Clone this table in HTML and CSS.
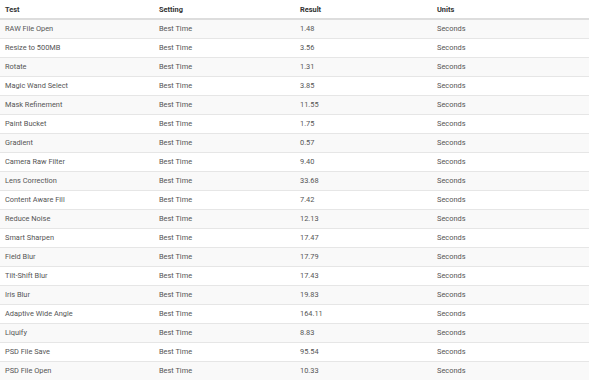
FILE: index.html
```html
<!DOCTYPE html>
<html lang="en">
<head>
    <meta charset="UTF-8">
    <title>Photoshop Benchmark Results</title>
    <link rel="stylesheet" href="styles.css">
</head>
<body>
    <!-- Results Table -->
    <table class="results">
        <thead>
            <tr>
                <th class="col-test">Test</th>
                <th class="col-setting">Setting</th>
                <th class="col-result">Result</th>
                <th>Units</th>
            </tr>
        </thead>
        <tbody>
            <tr><td>RAW File Open</td><td>Best Time</td><td>1.48</td><td>Seconds</td></tr>
            <tr><td>Resize to 500MB</td><td>Best Time</td><td>3.56</td><td>Seconds</td></tr>
            <tr><td>Rotate</td><td>Best Time</td><td>1.31</td><td>Seconds</td></tr>
            <tr><td>Magic Wand Select</td><td>Best Time</td><td>3.85</td><td>Seconds</td></tr>
            <tr><td>Mask Refinement</td><td>Best Time</td><td>11.55</td><td>Seconds</td></tr>
            <tr><td>Paint Bucket</td><td>Best Time</td><td>1.75</td><td>Seconds</td></tr>
            <tr><td>Gradient</td><td>Best Time</td><td>0.57</td><td>Seconds</td></tr>
            <tr><td>Camera Raw Filter</td><td>Best Time</td><td>9.40</td><td>Seconds</td></tr>
            <tr><td>Lens Correction</td><td>Best Time</td><td>33.68</td><td>Seconds</td></tr>
            <tr><td>Content Aware Fill</td><td>Best Time</td><td>7.42</td><td>Seconds</td></tr>
            <tr><td>Reduce Noise</td><td>Best Time</td><td>12.13</td><td>Seconds</td></tr>
            <tr><td>Smart Sharpen</td><td>Best Time</td><td>17.47</td><td>Seconds</td></tr>
            <tr><td>Field Blur</td><td>Best Time</td><td>17.79</td><td>Seconds</td></tr>
            <tr><td>Tilt-Shift Blur</td><td>Best Time</td><td>17.43</td><td>Seconds</td></tr>
            <tr><td>Iris Blur</td><td>Best Time</td><td>19.83</td><td>Seconds</td></tr>
            <tr><td>Adaptive Wide Angle</td><td>Best Time</td><td>164.11</td><td>Seconds</td></tr>
            <tr><td>Liquify</td><td>Best Time</td><td>8.83</td><td>Seconds</td></tr>
            <tr><td>PSD File Save</td><td>Best Time</td><td>95.54</td><td>Seconds</td></tr>
            <tr><td>PSD File Open</td><td>Best Time</td><td>10.33</td><td>Seconds</td></tr>
        </tbody>
    </table>
</body>
</html>
```
FILE: styles.css
```css
* {
    margin: 0;
    padding: 0;
    box-sizing: border-box;
    font-family: Roboto, 'Liberation Sans', sans-serif;
}
body {
    background-color: #fff;
}
.results {
    width: 589px;
    border-collapse: collapse;
    font-size: 7.4px;
    color: #555;
}
.results th {
    text-align: left;
    font-weight: 700;
    color: #333;
    height: 19px;
    padding: 0 5px;
    border-bottom: 2px solid #ddd;
}
.results td {
    height: 19px;
    padding: 0 5px;
    border-top: 1px solid #e6e6e6;
}
.results tbody tr:nth-child(odd) {
    background-color: #f9f9f9;
}
.col-test {
    width: 154px;
}
.col-setting {
    width: 141px;
}
.col-result {
    width: 137px;
}
```
